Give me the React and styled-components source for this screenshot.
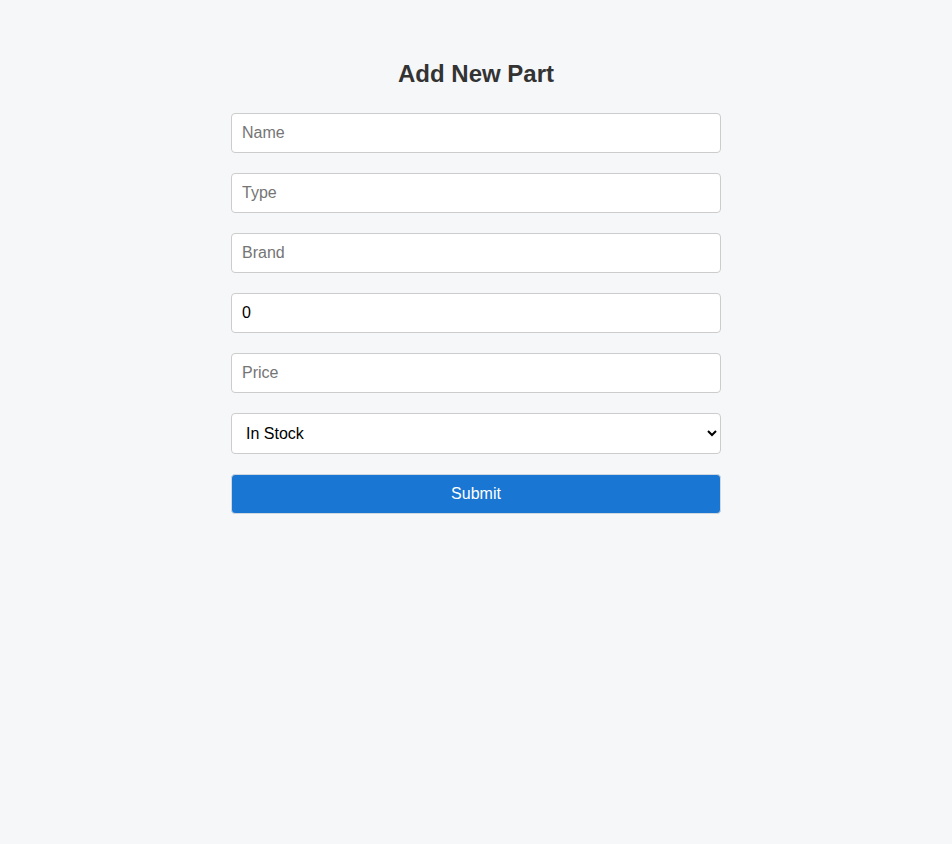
import styled, { createGlobalStyle } from "styled-components";

const Global = createGlobalStyle`
    body {
        margin: 0;
        background-color: #f6f7f9;
        font-family: "Liberation Sans", Arial, sans-serif;
    }
`

function App() {
    return (
        <Page>
            <Global />
            <Form onSubmit={e => e.preventDefault()}>
                <Title>Add New Part</Title>
                <Field placeholder="Name" />
                <Field placeholder="Type" />
                <Field placeholder="Brand" />
                <Field type="number" defaultValue={0} />
                <Field placeholder="Price" />
                <Select defaultValue="in">
                    <option value="in">In Stock</option>
                    <option value="out">Out of Stock</option>
                </Select>
                <Button type="submit">Submit</Button>
            </Form>
        </Page>
    )
}

const Page = styled.div`
    min-height: 844px;
    display: flex;
    justify-content: center;
    padding-top: 60px;
    box-sizing: border-box;
`
const Form = styled.form`
    width: 490px;
    display: flex;
    flex-direction: column;
    gap: 20px;
`
const Title = styled.h2`
    margin: 0 0 5px;
    text-align: center;
    font-size: 24px;
    line-height: 28px;
    font-weight: 700;
    color: #333333;
`
const Field = styled.input`
    height: 40px;
    box-sizing: border-box;
    padding: 0 10px;
    border: 1px solid #cccccc;
    border-radius: 4px;
    background: #ffffff;
    font-family: "Liberation Sans", Arial, sans-serif;
    font-size: 16px;
    color: #000000;
    &::placeholder {
        color: #757575;
    }
    &::-webkit-inner-spin-button {
        -webkit-appearance: none;
    }
`
const Select = styled.select`
    height: 41px;
    box-sizing: border-box;
    padding: 0 10px;
    border: 1px solid #cccccc;
    border-radius: 4px;
    background: #ffffff;
    font-family: "Liberation Sans", Arial, sans-serif;
    font-size: 16px;
    color: #000000;
`
const Button = styled.button`
    height: 40px;
    border: 1px solid #d0d7de;
    border-radius: 4px;
    background-color: #1976d2;
    color: #ffffff;
    font-family: "Liberation Sans", Arial, sans-serif;
    font-size: 16px;
    cursor: pointer;
`

export default App;
